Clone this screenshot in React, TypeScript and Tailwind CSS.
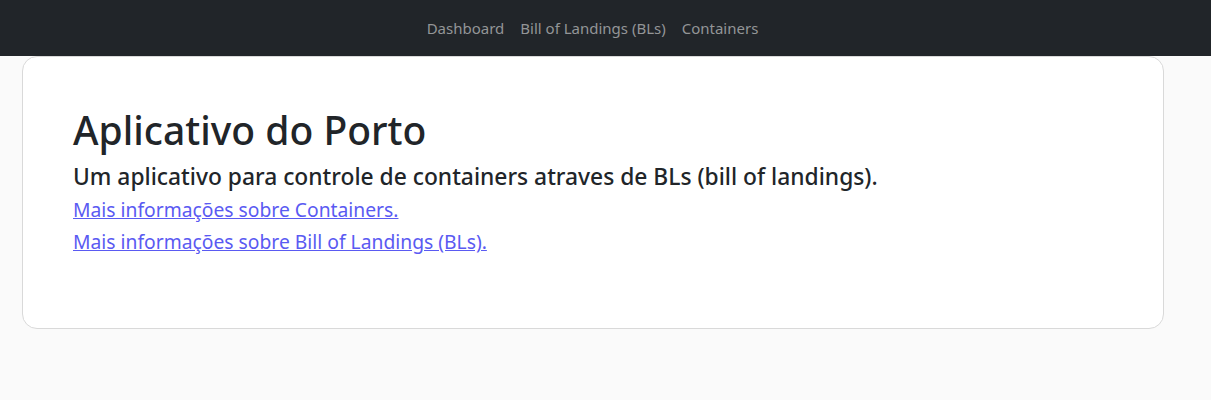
export default function App() {
  const navLinks = ['Dashboard', 'Bill of Landings (BLs)', 'Containers'];

  return (
    <div className="min-h-[400px] bg-[#fafafa] font-['Noto_Sans',sans-serif]">
      {/* Navbar */}
      <nav className="h-14 bg-[#212529] flex items-center justify-center pr-[26px]">
        {navLinks.map((link) => (
          <a key={link} href="#" className="px-2 text-[15px] text-[#939597] leading-6">
            {link}
          </a>
        ))}
      </nav>

      {/* Card */}
      <div className="ml-[22px] w-[1142px] h-[273px] bg-white border border-[#d9d9d9] rounded-[15px] pl-[50px] pt-[49px]">
        <h1 className="text-[39px] font-medium text-[#212529] leading-[48px]">Aplicativo do Porto</h1>
        <h4 className="text-[22.8px] font-medium text-[#212529] leading-[29px] mt-[8px]">
          Um aplicativo para controle de containers atraves de BLs (bill of landings).
        </h4>
        <div className="flex flex-col items-start text-[19.3px] leading-[32px] mt-[3px]">
          <a href="#" className="text-[#5a5af2] underline">Mais informações sobre Containers.</a>
          <a href="#" className="text-[#5a5af2] underline">Mais informações sobre Bill of Landings (BLs).</a>
        </div>
      </div>
    </div>
  );
}
